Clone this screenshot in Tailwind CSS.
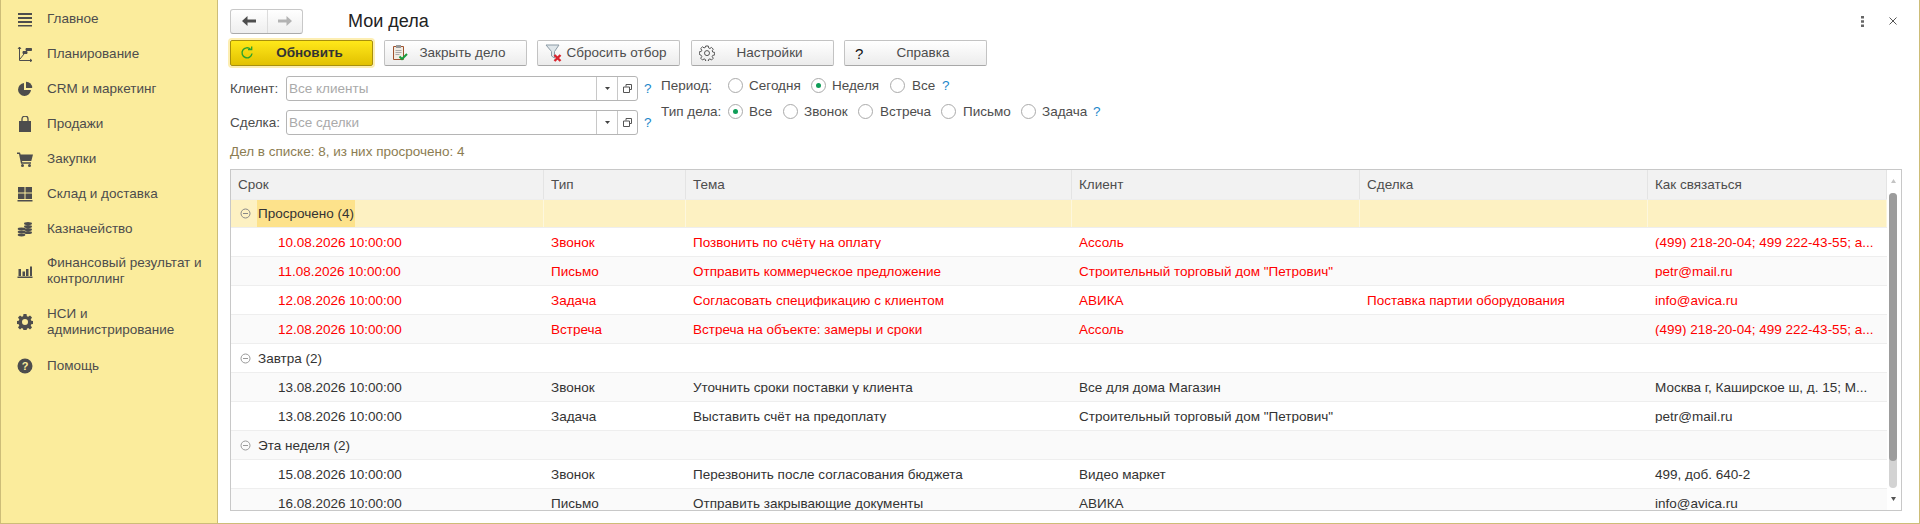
<!DOCTYPE html>
<html lang="ru">
<head>
<meta charset="utf-8">
<title>Мои дела</title>
<script src="https://cdn.jsdelivr.net/npm/@tailwindcss/browser@4"></script>
</head>
<body class="m-0 h-[524px] w-[1920px] overflow-hidden bg-white font-['Liberation_Sans',Arial,sans-serif] text-[13.5px] leading-none text-[#333]">
<div class="flex h-[524px] w-[1920px] border-b border-r border-[#cdbd78]">
  <!-- Sidebar -->
  <nav class="flex h-full w-[218px] shrink-0 flex-col border-x border-[#cdbd78] bg-[#fbec9c] pt-px text-[#4d4d4d]">
    <a class="flex h-[35px] items-center"><span class="flex w-[46px] shrink-0 justify-center pl-[2px]"><svg width="16" height="16" viewBox="0 0 16 16" fill="#4d4d4d"><path d="M1 2h14v2H1zM1 6h14v2H1zM1 10h14v2H1zM1 14h14v1.600H1z"/></svg></span><span>Главное</span></a>
    <a class="flex h-[35px] items-center"><span class="flex w-[46px] shrink-0 justify-center pl-[2px]"><svg width="16" height="16" viewBox="0 0 16 16" fill="none" stroke="#4d4d4d"><path d="M2.500 1v13.500H15M2.500 1L1 3M2.500 1L4 3M15 14.500l-2-1.500M15 14.500L13 16M3 13l4-5"/><path d="M6 5.500h4v2H6zM9 2.500h5.500v2H9z" fill="#4d4d4d"/></svg></span><span>Планирование</span></a>
    <a class="flex h-[35px] items-center"><span class="flex w-[46px] shrink-0 justify-center pl-[2px]"><svg width="16" height="16" viewBox="0 0 16 16" fill="#4d4d4d"><path d="M7 2a6.500 6.500 0 1 0 7 7H7z"/><path d="M9 .800A6 6 0 0 1 15.200 7H9z"/></svg></span><span>CRM и маркетинг</span></a>
    <a class="flex h-[35px] items-center"><span class="flex w-[46px] shrink-0 justify-center pl-[2px]"><svg width="16" height="16" viewBox="0 0 16 16" fill="#4d4d4d"><path d="M2 5h12v11H2z"/><path d="M5 7V3a3 3 0 0 1 6 0v4" fill="none" stroke="#4d4d4d" stroke-width="1.300"/></svg></span><span>Продажи</span></a>
    <a class="flex h-[35px] items-center"><span class="flex w-[46px] shrink-0 justify-center pl-[2px]"><svg width="16" height="16" viewBox="0 0 16 16" fill="#4d4d4d"><path d="M0 1.500h3l.6 2H16l-1.700 6.500H5l.3 1.300H14v1.400H4L2 3H0z"/><circle cx="5.500" cy="14.500" r="1.500"/><circle cx="12.500" cy="14.500" r="1.500"/></svg></span><span>Закупки</span></a>
    <a class="flex h-[35px] items-center"><span class="flex w-[46px] shrink-0 justify-center pl-[2px]"><svg width="16" height="16" viewBox="0 0 16 16" fill="#4d4d4d"><path d="M1 1h6.500v5.500H1zM8.500 1H15v5.500H8.500zM1 7.500h6.500V13H1zM8.500 7.500H15V13H8.500zM.5 14h15v1.500H.5z"/></svg></span><span>Склад и доставка</span></a>
    <a class="flex h-[35px] items-center"><span class="flex w-[46px] shrink-0 justify-center pl-[2px]"><svg width="16" height="16" viewBox="0 0 16 16" fill="#4d4d4d"><ellipse cx="11" cy="2.500" rx="4" ry="1.500"/><ellipse cx="11" cy="5.500" rx="4" ry="1.500"/><ellipse cx="11" cy="8.500" rx="4" ry="1.500"/><ellipse cx="11" cy="11.500" rx="4" ry="1.500"/><ellipse cx="4.500" cy="8" rx="3.800" ry="1.400"/><ellipse cx="4.500" cy="11" rx="3.800" ry="1.400"/><ellipse cx="4.500" cy="14" rx="3.800" ry="1.400"/></svg></span><span>Казначейство</span></a>
    <a class="flex h-[50px] items-center"><span class="flex w-[46px] shrink-0 justify-center pl-[2px]"><svg width="16" height="16" viewBox="0 0 16 16" fill="#4d4d4d"><path d="M1.500 6h2.500v7H1.500zM5.500 8.500H8V13H5.500zM9 6h2.500V13H9zM13 3.500h2V13h-2zM.5 13.500h15V15H.5z"/></svg></span><span class="leading-[16px]">Финансовый результат и контроллинг</span></a>
    <a class="flex h-[52px] items-center"><span class="flex w-[46px] shrink-0 justify-center pl-[2px]"><svg width="16" height="16" viewBox="0 0 16 16" fill="#4d4d4d"><path fill-rule="evenodd" d="M6.500.5h3l.4 2.200 1.300.6L13 2l2 2-1.300 1.900.6 1.300 2.200.4v2.800l-2.200.4-.6 1.300L15 13.900l-2 2-1.800-1.300-1.300.6-.4 2.200h-3l-.4-2.200-1.300-.6L3 15.900l-2-2 1.300-1.800-.6-1.300-2.200-.4V7.600l2.200-.4.6-1.300L1 4l2-2 1.800 1.300 1.300-.6zM8 5.500a3 3 0 1 0 0 6 3 3 0 0 0 0-6z" transform="translate(0 -.5)"/></svg></span><span class="leading-[16px]">НСИ и<br>администрирование</span></a>
    <a class="flex h-[36px] items-center"><span class="flex w-[46px] shrink-0 justify-center pl-[2px]"><svg width="16" height="16" viewBox="0 0 16 16"><circle cx="8" cy="8" r="7.500" fill="#4d4d4d"/><text x="8" y="12" text-anchor="middle" font-family="Liberation Sans" font-weight="700" font-size="11" fill="#fbec9c">?</text></svg></span><span>Помощь</span></a>
  </nav>

  <!-- Main -->
  <main class="flex min-w-0 flex-1 flex-col pl-[12px] pr-[15px]">
    <!-- Title row -->
    <div class="flex h-[40px] items-center pt-[2px]">
      <div class="flex h-[25px] w-[73px] rounded-[3px] border border-[#c8c8c8] border-b-[#aaa] bg-linear-to-b from-white to-[#eeeeee]">
        <span class="flex w-[37px] items-center justify-center border-r border-[#dcdcdc]"><svg width="14" height="10" viewBox="0 0 14 10" fill="#4d4d4d"><path d="M5.500 0v3.500H14v3H5.500V10L0 5z"/></svg></span>
        <span class="flex flex-1 items-center justify-center"><svg width="14" height="10" viewBox="0 0 14 10" fill="#b3b3b3"><path d="M8.500 0v3.500H0v3h8.500V10L14 5z"/></svg></span>
      </div>
      <h1 class="ml-[45px] text-[18px] font-normal text-[#222]">Мои дела</h1>
      <div class="ml-auto flex items-center gap-[25px] pr-[7px]">
        <svg width="3" height="11" viewBox="0 0 3 11" fill="#666"><path d="M0 0h3v2.500H0zM0 4.200h3v2.500H0zM0 8.400h3v2.500H0z"/></svg>
        <svg width="8" height="8" viewBox="0 0 8 8" stroke="#555"><path d="M.5.500l7 7M7.500.500l-7 7"/></svg>
      </div>
    </div>

    <!-- Command bar -->
    <div class="flex h-[26px] gap-[10.5px]">
      <button class="flex h-[26px] w-[143px] items-center rounded-[2px] border border-[#a8900c] bg-linear-to-b from-[#ffe819] to-[#e2c100] pl-[9px] pr-[13px] font-bold text-[#333] shadow-[0_0_0_2px_#fdeeb2]">
        <span class="flex w-[20px]"><svg width="14" height="14" viewBox="0 0 14 14" fill="none" stroke="#2ba32b" stroke-width="1.400"><path d="M12 7.500A5 5 0 1 1 10.500 3.200"/><path d="M8 3.700h3.700V.5" stroke-width="1.300"/></svg></span>
        <span class="flex-1 text-center">Обновить</span>
      </button>
      <button class="flex h-[26px] w-[143px] items-center rounded-[2px] border border-[#c3c3c3] border-b-[#a8a8a8] bg-linear-to-b from-white to-[#ececec] pl-[7px] pr-[13px] text-[#4d4d4d]">
        <span class="flex w-[21px]"><svg width="17" height="18" viewBox="0 0 17 18"><path d="M1.500 2.500h10v13h-10z" fill="#f1ece4" stroke="#a0522d"/><path d="M4 1h5v3H4z" fill="#999"/><path d="M3.500 6.500h6M3.500 8.500h6M3.500 10.500h4" stroke="#aaa"/><path d="M7.500 12.500l2.500 2.500 5-5" fill="none" stroke="#1a9c3e" stroke-width="2"/></svg></span>
        <span class="flex-1 text-center">Закрыть дело</span>
      </button>
      <button class="flex h-[26px] w-[143px] items-center rounded-[2px] border border-[#c3c3c3] border-b-[#a8a8a8] bg-linear-to-b from-white to-[#ececec] pl-[7px] pr-[12px] text-[#4d4d4d]">
        <span class="flex w-[21px]"><svg width="18" height="18" viewBox="0 0 18 18"><path d="M1 1h13L9.500 7.500V14l-3-2V7.500z" fill="#dfe6ea" stroke="#8b9aa5"/><path d="M9.500 11l6 6M15.500 11l-6 6" stroke="#d9232e" stroke-width="2.400"/></svg></span>
        <span class="flex-1 whitespace-nowrap text-center">Сбросить отбор</span>
      </button>
      <button class="flex h-[26px] w-[143px] items-center rounded-[2px] border border-[#c3c3c3] border-b-[#a8a8a8] bg-linear-to-b from-white to-[#ececec] pl-[7px] pr-[13px] text-[#4d4d4d]">
        <span class="flex w-[21px]"><svg width="16" height="16" viewBox="0 0 16 16" fill="none" stroke="#555"><path d="M6.700 1h2.600l.3 1.900 1.300.6 1.600-1.100 1.800 1.800-1.100 1.600.6 1.300 1.900.3v2.600l-1.900.3-.6 1.300 1.100 1.600-1.800 1.800-1.600-1.100-1.300.6-.3 1.900H6.700l-.3-1.900-1.300-.6-1.600 1.100-1.800-1.800 1.100-1.600-.6-1.300L.3 9.400V6.800l1.900-.3.6-1.300L1.700 3.600l1.800-1.800 1.600 1.100 1.300-.6z"/><circle cx="8" cy="8.100" r="2.500"/></svg></span>
        <span class="flex-1 text-center">Настройки</span>
      </button>
      <button class="flex h-[26px] w-[143px] items-center rounded-[2px] border border-[#c3c3c3] border-b-[#a8a8a8] bg-linear-to-b from-white to-[#ececec] pl-[10px] pr-[13px] text-[#4d4d4d]">
        <span class="flex w-[18px] text-[15px] text-[#111]">?</span>
        <span class="flex-1 text-center">Справка</span>
      </button>
    </div>

    <!-- Filters -->
    <div class="mt-[10px] flex">
      <div class="flex w-[431px] shrink-0 flex-col gap-[9px]">
        <div class="flex h-[25px] items-center text-[#4d4d4d]">
          <label class="w-[56px]">Клиент:</label>
          <div class="flex h-[25px] w-[352px] items-center rounded-[3px] border border-[#b5b5b5]">
            <span class="flex-1 pl-[2px] text-[#aaa]">Все клиенты</span>
            <span class="flex h-full w-[21px] items-center justify-center border-l border-[#c8c8c8]"><svg width="5" height="3" viewBox="0 0 5 3" fill="#444"><path d="M0 0h5L2.500 3z"/></svg></span>
            <span class="flex h-full w-[20px] items-center justify-center border-l border-[#c8c8c8]"><svg width="9" height="9" viewBox="0 0 9 9" fill="none" stroke="#555"><path d="M3 2.500V.5h5.500v5H6.500M.5 3h6v5.500h-6z"/></svg></span>
          </div>
          <span class="ml-[6px] text-[#1b87c9]">?</span>
        </div>
        <div class="flex h-[25px] items-center text-[#4d4d4d]">
          <label class="w-[56px]">Сделка:</label>
          <div class="flex h-[25px] w-[352px] items-center rounded-[3px] border border-[#b5b5b5]">
            <span class="flex-1 pl-[2px] text-[#aaa]">Все сделки</span>
            <span class="flex h-full w-[21px] items-center justify-center border-l border-[#c8c8c8]"><svg width="5" height="3" viewBox="0 0 5 3" fill="#444"><path d="M0 0h5L2.500 3z"/></svg></span>
            <span class="flex h-full w-[20px] items-center justify-center border-l border-[#c8c8c8]"><svg width="9" height="9" viewBox="0 0 9 9" fill="none" stroke="#555"><path d="M3 2.500V.5h5.500v5H6.500M.5 3h6v5.500h-6z"/></svg></span>
          </div>
          <span class="ml-[6px] text-[#1b87c9]">?</span>
        </div>
      </div>
      <div class="mt-[2px] flex flex-col gap-[11px] text-[#4d4d4d]">
        <div class="flex h-[15px] items-center">
          <span class="w-[67px]">Период:</span>
          <span class="h-[15px] w-[15px] rounded-full border border-[#aaa]"></span><span class="ml-[6px] w-[62px]">Сегодня</span>
          <span class="flex h-[15px] w-[15px] items-center justify-center rounded-full border border-[#aaa]"><span class="h-[5px] w-[5px] rounded-full bg-[#0f9d58]"></span></span><span class="ml-[6px] w-[58px]">Неделя</span>
          <span class="h-[15px] w-[15px] rounded-full border border-[#aaa]"></span><span class="ml-[7px] w-[30px]">Все</span>
          <span class="text-[#1b87c9]">?</span>
        </div>
        <div class="flex h-[15px] items-center">
          <span class="w-[67px]">Тип дела:</span>
          <span class="flex h-[15px] w-[15px] items-center justify-center rounded-full border border-[#aaa]"><span class="h-[5px] w-[5px] rounded-full bg-[#0f9d58]"></span></span><span class="ml-[6px] w-[34px]">Все</span>
          <span class="h-[15px] w-[15px] rounded-full border border-[#aaa]"></span><span class="ml-[6px] w-[54px]">Звонок</span>
          <span class="h-[15px] w-[15px] rounded-full border border-[#aaa]"></span><span class="ml-[7px] w-[61px]">Встреча</span>
          <span class="h-[15px] w-[15px] rounded-full border border-[#aaa]"></span><span class="ml-[7px] w-[58px]">Письмо</span>
          <span class="h-[15px] w-[15px] rounded-full border border-[#aaa]"></span><span class="ml-[6px] w-[51px]">Задача</span>
          <span class="text-[#1b87c9]">?</span>
        </div>
      </div>
    </div>

    <!-- Status -->
    <p class="mt-[10px] h-[15px] text-[#8c7d52]">Дел в списке: 8, из них просрочено: 4</p>

    <!-- Table -->
    <div class="relative mt-[9px] h-[342px] w-[1672px] shrink-0 overflow-hidden border border-[#c8c8c8]">
      <div class="w-[1656px]">
        <div class="grid h-[29px] grid-cols-[313px_142px_386px_288px_288px_239px] items-stretch bg-[#f2f2f2] text-[#4d4d4d] [&>div]:flex [&>div]:items-center [&>div]:border-r [&>div]:border-[#e4e4e4] [&>div]:px-[7px]">
          <div>Срок</div><div>Тип</div><div>Тема</div><div>Клиент</div><div>Сделка</div><div>Как связаться</div>
        </div>
        <div class="grid h-[29px] grid-cols-[313px_142px_386px_288px_288px_239px] items-stretch border-y border-[#eeeeee] bg-[#fdf1c2] [&>div]:border-r [&>div]:border-[#fdf7dd]">
          <div class="flex items-center pl-[9px]"><svg width="11" height="11" viewBox="0 0 11 11" fill="none" stroke="#888"><circle cx="5.500" cy="5.500" r="4.500"/><path d="M3 5.500h5"/></svg><span class="ml-[6px] flex h-[27px] items-center bg-[#fde28b] px-[1px]">Просрочено (4)</span></div><div></div><div></div><div></div><div></div><div></div>
        </div>
        <div class="grid h-[29px] grid-cols-[313px_142px_386px_288px_288px_239px] items-center border-b border-[#eeeeee] bg-white pt-px text-[#ff0000] [&>div]:truncate [&>div]:px-[7px]">
          <div class="pl-[47px]!">10.08.2026 10:00:00</div><div>Звонок</div><div>Позвонить по счёту на оплату</div><div>Ассоль</div><div></div><div>(499) 218-20-04; 499 222-43-55; а...</div>
        </div>
        <div class="grid h-[29px] grid-cols-[313px_142px_386px_288px_288px_239px] items-center border-b border-[#eeeeee] bg-[#fafafa] pt-px text-[#ff0000] [&>div]:truncate [&>div]:px-[7px]">
          <div class="pl-[47px]!">11.08.2026 10:00:00</div><div>Письмо</div><div>Отправить коммерческое предложение</div><div>Строительный торговый дом "Петрович"</div><div></div><div>petr@mail.ru</div>
        </div>
        <div class="grid h-[29px] grid-cols-[313px_142px_386px_288px_288px_239px] items-center border-b border-[#eeeeee] bg-white pt-px text-[#ff0000] [&>div]:truncate [&>div]:px-[7px]">
          <div class="pl-[47px]!">12.08.2026 10:00:00</div><div>Задача</div><div>Согласовать спецификацию с клиентом</div><div>АВИКА</div><div>Поставка партии оборудования</div><div>info@avica.ru</div>
        </div>
        <div class="grid h-[29px] grid-cols-[313px_142px_386px_288px_288px_239px] items-center border-b border-[#eeeeee] bg-[#fafafa] pt-px text-[#ff0000] [&>div]:truncate [&>div]:px-[7px]">
          <div class="pl-[47px]!">12.08.2026 10:00:00</div><div>Встреча</div><div>Встреча на объекте: замеры и сроки</div><div>Ассоль</div><div></div><div>(499) 218-20-04; 499 222-43-55; а...</div>
        </div>
        <div class="flex h-[29px] items-center border-b border-[#eeeeee] bg-white pl-[9px] pt-px">
          <svg width="11" height="11" viewBox="0 0 11 11" fill="none" stroke="#999"><circle cx="5.500" cy="5.500" r="4.500"/><path d="M3 5.500h5"/></svg><span class="ml-[7px]">Завтра (2)</span>
        </div>
        <div class="grid h-[29px] grid-cols-[313px_142px_386px_288px_288px_239px] items-center border-b border-[#eeeeee] bg-[#fafafa] pt-px [&>div]:truncate [&>div]:px-[7px]">
          <div class="pl-[47px]!">13.08.2026 10:00:00</div><div>Звонок</div><div>Уточнить сроки поставки у клиента</div><div>Все для дома Магазин</div><div></div><div>Москва г, Каширское ш, д. 15; М...</div>
        </div>
        <div class="grid h-[29px] grid-cols-[313px_142px_386px_288px_288px_239px] items-center border-b border-[#eeeeee] bg-white pt-px [&>div]:truncate [&>div]:px-[7px]">
          <div class="pl-[47px]!">13.08.2026 10:00:00</div><div>Задача</div><div>Выставить счёт на предоплату</div><div>Строительный торговый дом "Петрович"</div><div></div><div>petr@mail.ru</div>
        </div>
        <div class="flex h-[29px] items-center border-b border-[#eeeeee] bg-[#fafafa] pl-[9px] pt-px">
          <svg width="11" height="11" viewBox="0 0 11 11" fill="none" stroke="#999"><circle cx="5.500" cy="5.500" r="4.500"/><path d="M3 5.500h5"/></svg><span class="ml-[7px]">Эта неделя (2)</span>
        </div>
        <div class="grid h-[29px] grid-cols-[313px_142px_386px_288px_288px_239px] items-center border-b border-[#eeeeee] bg-white pt-px [&>div]:truncate [&>div]:px-[7px]">
          <div class="pl-[47px]!">15.08.2026 10:00:00</div><div>Звонок</div><div>Перезвонить после согласования бюджета</div><div>Видео маркет</div><div></div><div>499, доб. 640-2</div>
        </div>
        <div class="grid h-[29px] grid-cols-[313px_142px_386px_288px_288px_239px] items-center border-b border-[#eeeeee] bg-[#fafafa] pt-px [&>div]:truncate [&>div]:px-[7px]">
          <div class="pl-[47px]!">16.08.2026 10:00:00</div><div>Письмо</div><div>Отправить закрывающие документы</div><div>АВИКА</div><div></div><div>info@avica.ru</div>
        </div>
      </div>
      <!-- Scrollbar -->
      <div class="absolute right-0 top-0 h-full w-[14px] bg-white">
        <svg class="absolute left-[4px] top-[9px]" width="5" height="4" viewBox="0 0 5 4" fill="#c4c4c4"><path d="M2.500 0l2.500 4H0z"/></svg>
        <div class="absolute left-[2px] top-[23px] h-[295px] w-[8px] rounded-[4px] bg-[#d3d3d3]"></div>
        <div class="absolute left-[2px] top-[23px] h-[268px] w-[8px] rounded-[4px] bg-[#9c9c9c]"></div>
        <svg class="absolute bottom-[9px] left-[4px]" width="5" height="4" viewBox="0 0 5 4" fill="#555"><path d="M0 0h5L2.500 4z"/></svg>
      </div>
    </div>
  </main>
</div>
</body>
</html>
